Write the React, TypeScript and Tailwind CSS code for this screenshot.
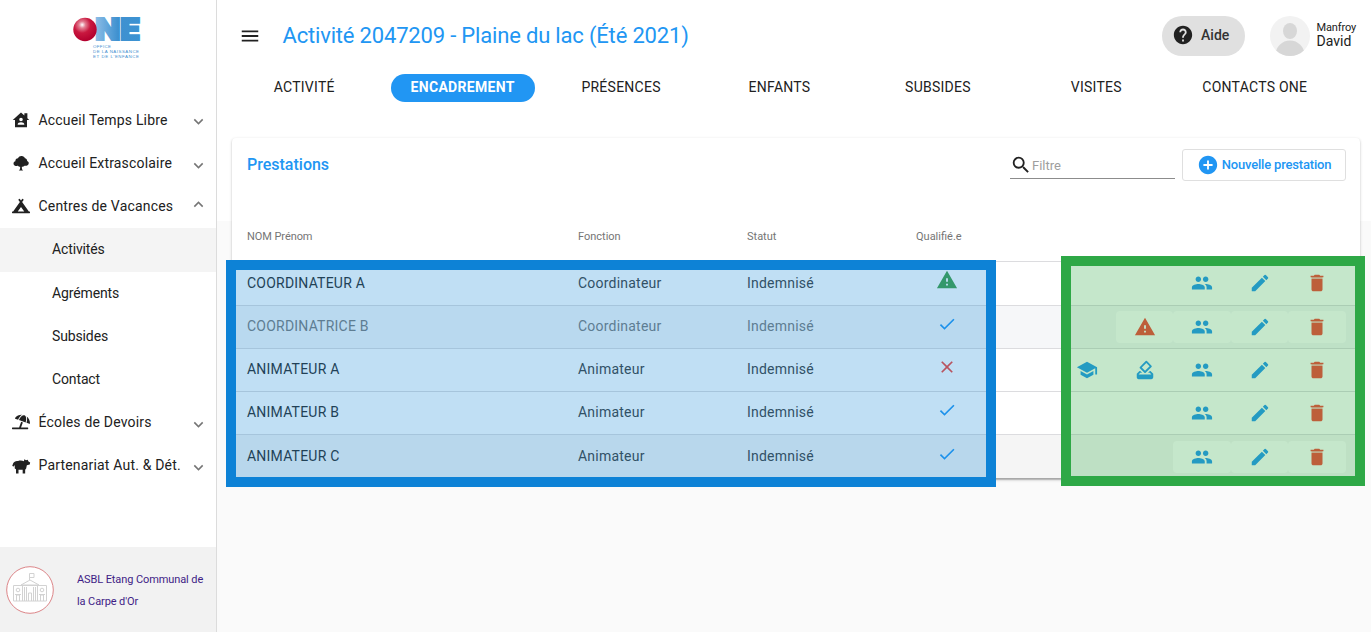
import React from "react";
import { MdGroup, MdEdit, MdWarning, MdSchool, MdOutlineHowToVote, MdCheck, MdClose, MdSearch, MdHelp, MdAddCircle, MdMenu, MdExpandMore, MdExpandLess } from "react-icons/md";
import { FaCampground, FaUmbrellaBeach } from "react-icons/fa";

const HomeIcon = () => (
  <svg viewBox="0 0 24 24" className="h-[18px] w-[18px]" fill="currentColor">
    <path fillRule="evenodd" d="M12 2L1 12H4v9.500h16v-9.500h3L20.500 9.500V3h-4v3zM12 9a2.400 2.400 0 1 1 0 4.800a2.400 2.400 0 0 1 0-4.800zM7.500 18.200c0-4.200 9-4.200 9 0z" />
  </svg>
);
const TreeIcon = () => (
  <svg viewBox="0 0 24 24" className="h-[18px] w-[18px]" fill="currentColor">
    <path d="M9 22c1.500-.8 1.900-2.200 1.900-5-1.500 0-2.200-.4-2.900-1.300-2.500.6-6-.3-6-3.200 0-1.600 1.100-2.700 2.500-3C4.300 7.200 6 5.800 8 5.700 9 3.300 11 2.500 13 2.700c2.200.1 3.600 1.300 4.200 3 2 .3 3.100 1.800 3 3.700 1.500.6 2.300 1.800 2.100 3.100-.3 2.400-3 3.400-5.600 3-.9 1-1.900 1.500-3.600 1.500 0 2.800.4 4.200 1.900 5z" />
  </svg>
);
const SheepIcon = () => (
  <svg viewBox="0 0 24 24" className="h-5 w-5" fill="currentColor">
    <path d="M2.500 9c1-2.500 3.500-3.500 6-3 2-.8 5-.7 7 .2L16 4l2 1 2-.5 1 2 2 1.200-.5 2.500-3.500.8-.8 4-1.200 1.500V21h-3v-4.500H9V21H6v-5l-1.500-1v-4.500L3.500 12.500 1.500 12z" />
  </svg>
);

const Logo = () => (
  <svg viewBox="0 0 70 44" className="h-[44px] w-[70px] overflow-visible">
    <defs>
      <radialGradient id="ball" cx="0.38" cy="0.3" r="0.7">
        <stop offset="0" stopColor="#fff" />
        <stop offset="0.2" stopColor="#e27d91" />
        <stop offset="0.5" stopColor="#c9183f" />
        <stop offset="1" stopColor="#b3002e" />
      </radialGradient>
      <linearGradient id="letters" x1="0" y1="0" x2="1" y2="0">
        <stop offset="0" stopColor="#8dbde6" />
        <stop offset="0.5" stopColor="#3f91d0" />
        <stop offset="1" stopColor="#3c92d2" />
      </linearGradient>
    </defs>
    <text x="23.200" y="24" textLength="45" lengthAdjust="spacingAndGlyphs" fontFamily="Inter" fontWeight="900" fontSize="29.500" stroke="url(#letters)" strokeWidth="2" fill="url(#letters)">NE</text>
    <circle cx="13" cy="13.500" r="11.700" fill="url(#ball)" />
    <g fontFamily="Liberation Sans" fontSize="4.400" fill="#3f8fd0">
      <text x="21" y="32.200" textLength="18">OFFICE</text>
      <text x="21" y="37.300" textLength="46">DE LA NAISSANCE</text>
      <text x="21" y="42.400" textLength="46">ET DE L'ENFANCE</text>
    </g>
  </svg>
);

const Building = () => (
  <svg viewBox="0 0 48 48" className="h-12 w-12 shrink-0" fill="none" stroke="#d2d2d2">
    <circle cx="24" cy="24" r="23.300" fill="#fff" stroke="#dc8588" />
    <path d="M23.500 14V7.500h4.500v4h-4.500M15 19l9-5 9 5zM7.500 19.500h33v15.500h-33zM16.500 20v15M31.500 20v15M18.500 21v14M20.500 21v14M27.500 21v14M29.500 21v14M22.500 35v-8h3v8M10.500 35v-6h3v6M34.500 35v-6h3v6M9 28.500h6M33 28.500h6" />
    <circle cx="12" cy="24" r="1.800" /><circle cx="36" cy="24" r="1.800" />
  </svg>
);

const tabs = ["ACTIVITÉ", "ENCADREMENT", "PRÉSENCES", "ENFANTS", "SUBSIDES", "VISITES", "CONTACTS ONE"];

function NavItem({ icon, label, open }: { icon: React.ReactNode; label: string; open?: boolean }) {
  return (
    <div className="flex h-[43.200px] items-center pl-[11px] pr-2 text-[#212121]">
      <span className="flex w-[20px] justify-center">{icon}</span>
      <span className="ml-[7.500px] flex-1 whitespace-nowrap text-[14px] tracking-[0.18px]">{label}</span>
      {open ? <MdExpandLess className="mb-[3px] h-[19px] w-[19px] text-[#757575]" /> : <MdExpandMore className="mt-[3.500px] h-[19px] w-[19px] text-[#757575]" />}
    </div>
  );
}
const SubItem = ({ label, active }: { label: string; active?: boolean }) => (
  <div className={`flex items-center pl-[52px] text-[14px] tracking-[-0.13px] text-[#212121] ${active ? "h-[43.800px] bg-[#f4f4f4]" : "h-[43px]"}`}>{label}</div>
);

const rows = [
  { name: "COORDINATEUR A", role: "Coordinateur", state: "warn", bg: "h-[44px] bg-white border-[#dcdcdf]", actions: 3 },
  { name: "COORDINATRICE B", role: "Coordinateur", state: "ok", bg: "h-[43px] bg-[#f6f7f9] border-[#dcdcdf]", actions: 4, muted: true },
  { name: "ANIMATEUR A", role: "Animateur", state: "no", bg: "h-[43px] bg-white border-[#dcdcdf]", actions: 5 },
  { name: "ANIMATEUR B", role: "Animateur", state: "ok", bg: "h-[43px] bg-white border-[#dcdcdf]", actions: 3 },
  { name: "ANIMATEUR C", role: "Animateur", state: "ok", bg: "h-[44px] bg-[#f5f5f5] border-[#a8a8a8]", actions: 3 },
];
const ic = "h-[22px] w-[22px]";
const Delete = () => (
  <svg viewBox="0 0 24 24" className={ic} fill="currentColor">
    <path d="M6 19c0 1.100.9 2 2 2h8c1.100 0 2-.9 2-2V7.500H6zM19 4h-3.500l-1-1h-5l-1 1H5v1.700h14z" />
    <path d="M6 5.700h12v1.800H6z" opacity=".5" />
  </svg>
);
const Vote = () => (
  <svg viewBox="0 0 24 24" className={ic} fill="currentColor">
    <MdOutlineHowToVote size={24} />
    <path d="M4 18.500h16V21H4z" />
  </svg>
);

function Row({ r }: { r: (typeof rows)[number] }) {
  const icons = [
    <MdSchool className={ic} />,
    r.actions === 4 ? <MdWarning className={ic} /> : <Vote />,
    <MdGroup className={ic} />,
    <MdEdit className={ic} />,
    <Delete />,
  ];
  const lift = r.bg.startsWith("h-[43px]") ? "pb-[2px]" : "";
  return (
    <div className={`flex items-center border-b pl-[15px] text-[14px] tracking-[0.22px] ${r.bg} ${r.muted ? "text-[#7b7b7b]" : "text-[#2b2b2b]"}`}>
      <div className={`w-[331px] ${lift}`}>{r.name}</div>
      <div className={`w-[169px] ${lift} ${r.muted ? "" : "text-[#404040]"}`}>{r.role}</div>
      <div className={`w-[169px] ${lift} ${r.muted ? "" : "text-[#404040]"}`}>Indemnisé</div>
      <div className="mb-[6px] flex w-[62px] justify-center">
        {r.state === "warn" && <MdWarning className="mb-[2px] h-[22px] w-[22px] text-[#43a047]" />}
        {r.state === "ok" && <MdCheck className="h-5 w-5 text-[#2196f3]" />}
        {r.state === "no" && <MdClose className="h-5 w-5 text-[#f44336]" />}
      </div>
      <div className={`ml-auto mr-[14.200px] flex ${r.state === "warn" ? "mb-[2px]" : r.actions === 4 ? "mb-px" : ""}`}>
        {icons.slice(5 - r.actions).map((icon, n) => {
          const k = n + 5 - r.actions;
          return (
            <span key={k} className={`flex h-8 w-[57.500px] items-center justify-center rounded-[4px] bg-white ${k === 4 || (k === 1 && r.actions === 4) ? "text-[#f44336]" : "text-[#2196f3]"}`}>{icon}</span>
          );
        })}
      </div>
    </div>
  );
}

export default function App() {
  return (
    <div className="relative flex h-[632px] w-[1371px] overflow-hidden bg-[#fafafa] font-['Roboto',sans-serif]">
      <aside className="flex w-[217px] shrink-0 flex-col border-r border-[#dcdcdc] bg-white">
        <div className="flex h-[98.500px] pl-[72px] pt-[16px]"><Logo /></div>
        <NavItem icon={<HomeIcon />} label="Accueil Temps Libre" />
        <NavItem icon={<TreeIcon />} label="Accueil Extrascolaire" />
        <NavItem icon={<FaCampground className="h-[16px] w-[18px]" />} label="Centres de Vacances" open />
        <SubItem label="Activités" active />
        <SubItem label="Agréments" />
        <SubItem label="Subsides" />
        <SubItem label="Contact" />
        <NavItem icon={<FaUmbrellaBeach className="h-[16px] w-[18px]" />} label="Écoles de Devoirs" />
        <NavItem icon={<SheepIcon />} label="Partenariat Aut. &amp; Dét." />
        <div className="mt-auto flex h-[85px] items-center bg-[#f2f2f2] pl-[5.500px] pt-px">
          <Building />
          <div className="ml-[23.500px] whitespace-nowrap pt-px text-[11px] leading-[22px] tracking-[-0.1px] text-[#3f1d86]">ASBL Etang Communal de<br />la Carpe d'Or</div>
        </div>
      </aside>
      <main className="flex min-w-0 flex-1 flex-col bg-[linear-gradient(#fff_221px,#fafafa_221px)]">
        <header className="flex h-[72px] items-center pl-[22px] pr-[15px]">
          <MdMenu className="h-[22px] w-[22px] text-[#212121]" />
          <h1 className="mb-[2px] ml-[21.500px] text-[22px] tracking-[-0.18px] text-[#2196f3]">Activité 2047209 - Plaine du lac (Été 2021)</h1>
          <div className="ml-auto flex h-10 w-[83px] items-center rounded-full bg-[#e0e0e0] pb-[2px] pl-[10.500px] text-[14px] font-medium text-[#333]">
            <MdHelp className="mr-[7px] h-[22px] w-[22px] text-[#212121]" />Aide
          </div>
          <svg viewBox="0 0 40 40" className="ml-[25px] h-10 w-10">
            <clipPath id="avatar"><circle cx="20" cy="20" r="20" /></clipPath>
            <g clipPath="url(#avatar)"><path d="M0 0h40v40H0z" fill="#f2f2f2" /><ellipse cx="20" cy="15" rx="7" ry="8" fill="#d7d7d7" /><circle cx="20" cy="39" r="14.500" fill="#d7d7d7" /></g>
          </svg>
          <div className="mb-1 ml-[7px] tracking-[-0.15px] text-[#212121]"><div className="text-[11px] leading-[13px]">Manfroy</div><div className="text-[14px] leading-[14px] tracking-normal">David</div></div>
        </header>
        <nav className="grid h-[30px] grid-cols-7 pl-[8px] pr-[37px] text-[14px] text-[#212121]">
          {tabs.map((t, i) => (
            <div key={t} className="flex items-center justify-center">
              <span className={`whitespace-nowrap ${i === 1 ? "mt-[2px] h-7 rounded-full bg-[#2196f3] px-5 leading-[27px] font-bold tracking-[0.3px] text-white" : "tracking-[0.25px]"}`}>{t}</span>
            </div>
          ))}
        </nav>
        <section className="ml-[15px] mr-[11px] mt-[36px] h-[341px] rounded-[4px] bg-white shadow-[0_1px_1px_rgba(0,0,0,0.14),0_1px_3px_rgba(0,0,0,0.22)]">
          <div className="flex h-[73px] items-start pl-[15px] pr-[14px] pt-[11px]">
            <h2 className="mt-[4px] text-[16px] font-medium text-[#2196f3]">Prestations</h2>
            <div className="ml-auto flex h-[30px] w-[165px] items-center border-b border-[#8c8c8c] text-[13px] text-[#9e9e9e]">
              <MdSearch className="mt-[2px] h-[22px] w-[22px] text-[#212121]" /><span className="mt-[5px]">Filtre</span>
            </div>
            <button className="ml-[7px] flex h-8 w-[164px] items-center justify-center rounded-[3px] border border-[#dfdfdf] text-[13px] font-medium tracking-[-0.18px] text-[#2196f3]">
              <MdAddCircle className="mr-[3px] h-[22px] w-[22px]" />Nouvelle prestation
            </button>
          </div>
          <div className="flex h-[51px] items-center border-b border-[#dcdcdf] pl-[15px] pt-[2px] text-[11px] text-[#757575]">
            <div className="w-[331px] tracking-[-0.07px]">NOM Prénom</div><div className="w-[169px]">Fonction</div><div className="w-[169px]">Statut</div><div>Qualifié.e</div>
          </div>
          {rows.map((r) => <Row key={r.name} r={r} />)}
        </section>
      </main>
      <div className="absolute left-[226px] top-[260px] h-[227px] w-[770px] border-[10px] border-[#0d82d6] bg-[#0d82d6]/26 bg-clip-padding" />
      <div className="absolute left-[1061px] top-[256px] h-[230px] w-[304px] border-[10px] border-[#2ea846] bg-[#2ea846]/28 bg-clip-padding" />
    </div>
  );
}
